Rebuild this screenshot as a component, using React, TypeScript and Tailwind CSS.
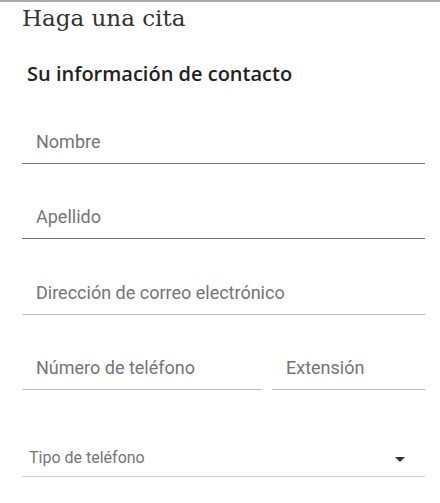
import React from "react";

type FieldProps = {
  label: string;
  className?: string;
  dark?: boolean;
};

const Field: React.FC<FieldProps> = ({ label, className = "", dark = false }) => (
  <div
    className={`flex h-[46px] items-end border-b pb-[9px] pl-[14px] ${
      dark ? "border-[#777777]" : "border-[#bdbdbd]"
    } ${className}`}
  >
    <span className="text-[18px] leading-6 text-[#757575]">{label}</span>
  </div>
);

const App: React.FC = () => {
  return (
    <div
      className="min-h-[503px] w-[440px] border-t-2 border-[#a8a8a8] bg-white"
      style={{ fontFamily: "Roboto, 'Liberation Sans', sans-serif" }}
    >
      {/* Encabezado */}
      <h1
        className="pl-[22px] pt-[2px] text-[23px] leading-7 text-[#333333]"
        style={{ fontFamily: "'DejaVu Serif', 'Liberation Serif', serif" }}
      >
        Haga una cita
      </h1>

      <h2
        className="mt-[30px] pl-[27px] text-[20px] font-semibold leading-6 text-[#222222]"
        style={{ fontFamily: "'Open Sans', 'Liberation Sans', sans-serif" }}
      >
        Su información de contacto
      </h2>

      {/* Formulario */}
      <div className="mt-[32px] pl-[22px] pr-[15px]">
        <Field label="Nombre" dark />
        <Field label="Apellido" dark className="mt-[29px]" />
        <Field label="Dirección de correo electrónico" className="mt-[30px]" />

        <div className="mt-[29px] flex gap-[10px]">
          <Field label="Número de teléfono" className="flex-1" />
          <Field label="Extensión" className="w-[153px]" />
        </div>

        <div className="mt-[41px] flex h-[46px] items-end justify-between border-b border-[#d0d0d0] pb-[6px] pl-[7px] pr-[20px]">
          <span className="text-[16px] leading-6 text-[#757575]">
            Tipo de teléfono
          </span>
          <svg width="10" height="5" viewBox="0 0 10 5" className="mb-[8px]">
            <path d="M0 0 L10 0 L5 5 Z" fill="#333333" />
          </svg>
        </div>
      </div>
    </div>
  );
};

export default App;
